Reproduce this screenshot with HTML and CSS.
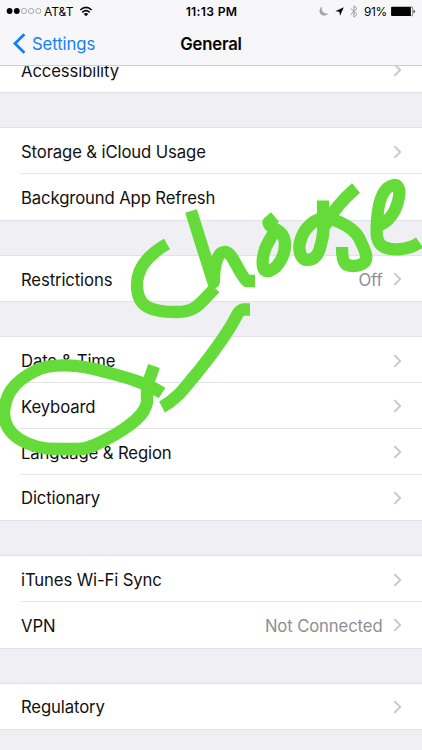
FILE: index.html
```
<!DOCTYPE html>
<html lang="en">
<head>
<meta charset="utf-8">
<title>General</title>
<link rel="stylesheet" href="styles.css">
</head>
<body>
<svg class="defs"><symbol id="chev" viewBox="0 0 10 14"><path d="M1.4 1.2 7.2 7 1.4 12.8" fill="none" stroke="#c7c7cc" stroke-width="1.9"/></symbol></svg>
<div class="screen">
  <header class="top">
    <div class="status">
      <div class="carrier">
        <svg width="36" height="8" viewBox="0 0 36 8"><g fill="#030303"><circle cx="3.6" cy="4" r="2.9"/><circle cx="10.8" cy="4" r="2.9"/></g><g fill="none" stroke="#777" stroke-width=".6"><circle cx="18" cy="4" r="2.6"/><circle cx="25.1" cy="4" r="2.6"/><circle cx="32.3" cy="4" r="2.6"/></g></svg>
        <span class="att">AT&amp;T</span>
        <svg class="wifi" width="14" height="11" viewBox="0 0 14 11"><g fill="none" stroke="#030303" stroke-width="1.6"><path d="M1.3 4Q7-1.2 12.7 4M3.3 6.4Q7 2.9 10.7 6.4"/></g><path d="M4.8 8.1Q7 6.1 9.2 8.1L7 10.3Z" fill="#030303"/></svg>
      </div>
      <span class="time">11:13 PM</span>
      <div class="right">
        <svg width="10" height="10" viewBox="0 0 10 10"><path d="M3.4.6A4.7 4.7 0 1 0 9.4 7 4.6 4.6 0 0 1 3.4.6Z" fill="#a4a4a7"/></svg>
        <svg class="loc" width="9" height="9" viewBox="0 0 9 9"><path d="M8.8.3 5 8.8 4.4 4.8.3 4.3Z" fill="#030303"/></svg>
        <svg class="bt" width="8" height="13" viewBox="0 0 8 13"><path d="M.7 3.4 7 9.4 4 12.2V.8L7 3.6.7 9.6" fill="none" stroke="#98989b" stroke-width="1"/></svg>
        <span class="pct">91%</span>
        <svg class="batt" width="26" height="11" viewBox="0 0 26 11"><path d="M1.9.7h19v9.4h-19a.8.8 0 0 1-.8-.8V1.5a.8.8 0 0 1 .8-.8Z" fill="#030303"/><path d="M21 .9h.6a1.1 1.1 0 0 1 1.1 1.1v6.8a1.1 1.1 0 0 1-1.1 1.1H21" fill="none" stroke="#333" stroke-width=".6"/><path d="M23.7 4q1.1.3 1.1 1.5t-1.1 1.5Z" fill="#030303"/></svg>
      </div>
    </div>
    <nav class="nav">
      <div class="back"><svg width="13" height="21" viewBox="0 0 13 21"><path d="M11.4 1.2 2 10.5l9.4 9.3" fill="none" stroke="#147efb" stroke-width="2.8"/></svg><span>Settings</span></div>
      <h1>General</h1>
    </nav>
  </header>
  <main class="list">
    <section class="group first"><div class="row"><span>Accessibility</span><svg class="chev"><use href="#chev"/></svg></div></section>
    <section class="group"><div class="row"><span>Storage &amp; iCloud Usage</span><svg class="chev"><use href="#chev"/></svg></div><div class="row"><span>Background App Refresh</span></div></section>
    <section class="group"><div class="row"><span>Restrictions</span><span class="value">Off</span><svg class="chev"><use href="#chev"/></svg></div></section>
    <section class="group"><div class="row"><span>Date &amp; Time</span><svg class="chev"><use href="#chev"/></svg></div><div class="row"><span>Keyboard</span><svg class="chev"><use href="#chev"/></svg></div><div class="row"><span>Language &amp; Region</span><svg class="chev"><use href="#chev"/></svg></div><div class="row"><span>Dictionary</span><svg class="chev"><use href="#chev"/></svg></div></section>
    <section class="group"><div class="row"><span>iTunes Wi-Fi Sync</span><svg class="chev"><use href="#chev"/></svg></div><div class="row"><span>VPN</span><span class="value">Not Connected</span><svg class="chev"><use href="#chev"/></svg></div></section>
    <section class="group"><div class="row"><span>Regulatory</span><svg class="chev"><use href="#chev"/></svg></div></section>
  </main>
  <svg class="ink" viewBox="0 0 422 750">
    <path d="M167 244C151 253 137 266 137 285C137 306 149 312 177 312C197 312 201 302 215 288"/>
    <path d="M191 211 213 281Q214 284 214 280C214 266 217 252 225 252C233 252 239 275 247 281H255"/>
    <path d="M275 217 268.500 222.500Q269 226 273 228C281 231 285 236 285 245C285 257 276 271 267 271C260 271 262 252 269 241C272 235 275 232 277 229"/>
    <path d="M323 200.500C323 219 325 233 321 244C319 254 315 260 308 260C301 260 298 252 300 242C304 226 317 217 328 218C345 223 357 231 361 242C365 251 370 260 362 264C356 267 350 266 346 264.500Q342 262 342 247"/>
    <path d="M356 188Q335 206 325 226"/>
    <path d="M372 227C386 225 391 217 395 210C400 198 402 185 394 185C382 187 378 204 377 221C376 234 376 243 384 247C392 251 409 250 419.500 242.500"/>
    <path d="M162 393C145 382 124 377 102 371C80 365 52 362 35 371C11 383 5 397 4 413C4 436 29 449 58 449H79C91 449 105 440 116 434C131 425 145 415 147 402V386L154 366"/>
    <path d="M162 407C179 398 187 384 197 373C213 353 227 335 237 315Q240 309.500 244 309.500H250"/>
  </svg>
</div>
</body>
</html>
```
FILE: styles.css
```
* { box-sizing: border-box; }
body { margin: 0; background: #efeff4; color: #111; font-family: Inter, "Liberation Sans", sans-serif; }
.defs { display: none; }
.screen { position: relative; width: 422px; height: 750px; overflow: hidden; }
.top { height: 66px; background: #f7f7f9; border-bottom: 1px solid #cfcfd2; }
.status { height: 22px; display: grid; grid-template-columns: 1fr auto 1fr; align-items: center; font-size: 12px; color: #030303; padding: 0 6px; }
.carrier, .right { display: flex; align-items: center; }
.att { margin-left: 2px; }
.wifi { margin-left: 6px; }
.time { font-weight: 600; font-size: 12.2px; letter-spacing: .3px; padding-left: 1px; }
.right { justify-content: flex-end; }
.loc { margin-left: 6px; }
.bt { margin-left: 6px; }
.pct { margin-left: 6px; font-size: 11.9px; letter-spacing: -.3px; }
.batt { margin-left: 3px; }
.nav { height: 43px; display: grid; grid-template-columns: 1fr auto 1fr; align-items: center; padding: 0 13px; }
.back { display: flex; align-items: center; gap: 6px; color: #147efb; font-size: 16.7px; letter-spacing: -.1px; }
h1 { margin: 0; font-size: 16.7px; font-weight: 600; letter-spacing: -.2px; color: #030303; }
.list { height: 684px; overflow: hidden; }
.group { margin-bottom: 36px; background: #fff; box-shadow: 0 -1px 0 #e2e2e6, 0 1px 0 #e2e2e6; }
.first { margin-top: -19.7px; margin-bottom: 36.4px; }
.row { height: 45.7px; display: flex; align-items: center; margin-left: 21px; padding: 2px 19.500px 0 0; font-size: 16.7px; letter-spacing: -.12px; }
.first .row { padding-top: 3px; }
.row + .row { box-shadow: 0 -1px 0 #e4e4e7; }
.chev { width: 10px; height: 14px; margin: -1px 0 0 auto; flex: none; }
.value { margin-left: auto; color: #8e8e93; }
.value + .chev { margin-left: 10px; }
.ink { position: absolute; inset: 0; width: 422px; height: 750px; fill: none; stroke: #64db38; stroke-width: 12.3; stroke-linejoin: round; pointer-events: none; }
```
